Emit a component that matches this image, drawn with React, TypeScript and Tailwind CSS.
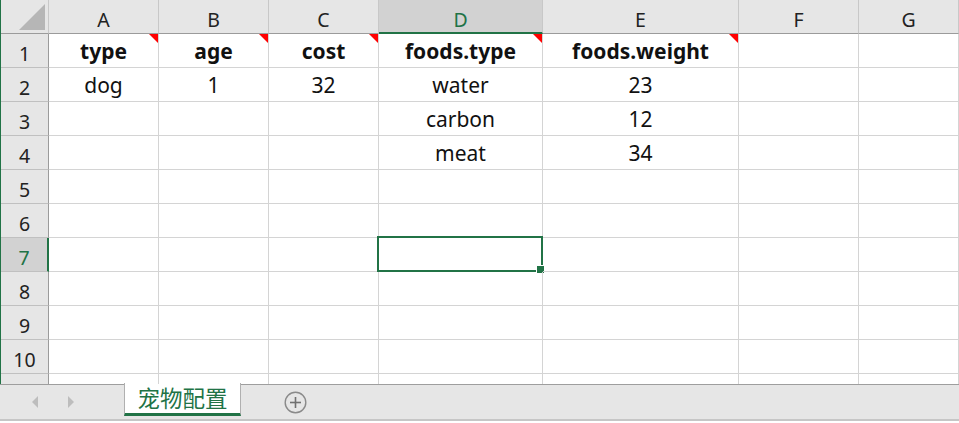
import React from 'react';

const cols = ['A', 'B', 'C', 'D', 'E', 'F', 'G'];

// row index -> column values
const data: Record<number, string[]> = {
  1: ['type', 'age', 'cost', 'foods.type', 'foods.weight', '', ''],
  2: ['dog', '1', '32', 'water', '23', '', ''],
  3: ['', '', '', 'carbon', '12', '', ''],
  4: ['', '', '', 'meat', '34', '', ''],
};

const commented = [0, 1, 2, 3, 4];

export default function App() {
  const rows = [1, 2, 3, 4, 5, 6, 7, 8, 9, 10, 11];

  return (
    <div className="w-[959px] h-[423px] overflow-hidden bg-white flex flex-col font-['Noto_Sans',sans-serif] text-[#111]">
      {/* Sheet grid */}
      <div className="h-[384px] overflow-hidden border-l border-l-[#217346]">
        <div className="grid grid-cols-[48px_110px_110px_110px_164px_196px_120px_1fr]">
          {/* corner */}
          <div className="h-[34px] bg-[#e6e6e6] border-r border-b border-r-[#c8c8c8] border-b-[#9b9b9b] flex items-end justify-end pr-[3px] pb-[3px]">
            <svg width="26" height="26" viewBox="0 0 26 26">
              <polygon points="26,0 26,26 0,26" fill="#b6b6b6" />
            </svg>
          </div>
          {cols.map((c) => {
            const sel = c === 'D';
            return (
              <div
                key={c}
                className={`h-[34px] flex items-center justify-center text-[19.5px] border-r border-r-[#c8c8c8] ${
                  sel
                    ? 'bg-[#d2d2d2] text-[#217346] border-b-2 border-b-[#217346] pt-[8px]'
                    : 'bg-[#e6e6e6] text-[#222] border-b border-b-[#9b9b9b] pt-[7px]'
                }`}
              >
                {c}
              </div>
            );
          })}

          {rows.map((r) => {
            const selRow = r === 7;
            const vals = data[r] || ['', '', '', '', '', '', ''];
            return (
              <React.Fragment key={r}>
                <div
                  className={`h-[34px] flex items-center justify-center text-[19.5px] pt-[6px] border-b border-b-[#c0c0c0] ${
                    selRow
                      ? 'bg-[#d2d2d2] text-[#217346] border-r-2 border-r-[#217346]'
                      : 'bg-[#e6e6e6] text-[#222] border-r border-r-[#9b9b9b]'
                  }`}
                >
                  {r < 11 ? r : ''}
                </div>
                {vals.map((v, ci) => (
                  <div
                    key={ci}
                    className={`relative h-[34px] flex items-center justify-center text-[21px] pt-[3px] border-r border-b border-[#d4d4d4] ${
                      r === 1 ? 'font-bold' : ''
                    }`}
                  >
                    {v}
                    {r === 1 && commented.includes(ci) && (
                      <span className="absolute top-0 right-0 w-0 h-0 border-l-[9px] border-l-transparent border-t-[9px] border-t-[#ff0000]" />
                    )}
                    {selRow && ci === 3 && (
                      <>
                        <span className="absolute left-[-2px] top-[-2px] right-[-1px] bottom-[-1px] border-2 border-[#217346]" />
                        <span className="absolute right-[-3px] bottom-[-3px] w-[9px] h-[9px] bg-[#217346] border border-white" />
                      </>
                    )}
                  </div>
                ))}
              </React.Fragment>
            );
          })}
        </div>
      </div>

      {/* Sheet tabs bar */}
      <div className="h-[37px] bg-[#e6e6e6] border-t border-t-[#9e9e9e] border-b-2 border-b-[#c6c6c6] flex items-stretch">
        <div className="w-[124px] flex items-center">
          <svg width="8" height="12" viewBox="0 0 8 12" className="ml-[31px]">
            <polygon points="7,0 7,12 1,6" fill="#bdbdbd" />
          </svg>
          <svg width="8" height="12" viewBox="0 0 8 12" className="ml-[28px]">
            <polygon points="1,0 1,12 7,6" fill="#bdbdbd" />
          </svg>
        </div>
        <div className="mt-[-2px] mb-[3px] w-[117px] bg-white border-l border-r border-[#b0b0b0] border-b-[3px] border-b-[#217346] flex items-center justify-center text-[22.5px] text-[#217346] font-['Noto_Sans_CJK_SC',sans-serif]">
          宠物配置
        </div>
        <div className="flex items-center ml-[43px]">
          <svg width="23" height="23" viewBox="0 0 23 23">
            <circle cx="11.5" cy="11.5" r="10.3" fill="none" stroke="#8a8a8a" strokeWidth="1.4" />
            <line x1="11.5" y1="6" x2="11.5" y2="17" stroke="#707070" strokeWidth="1.6" />
            <line x1="6" y1="11.5" x2="17" y2="11.5" stroke="#707070" strokeWidth="1.6" />
          </svg>
        </div>
      </div>
    </div>
  );
}
